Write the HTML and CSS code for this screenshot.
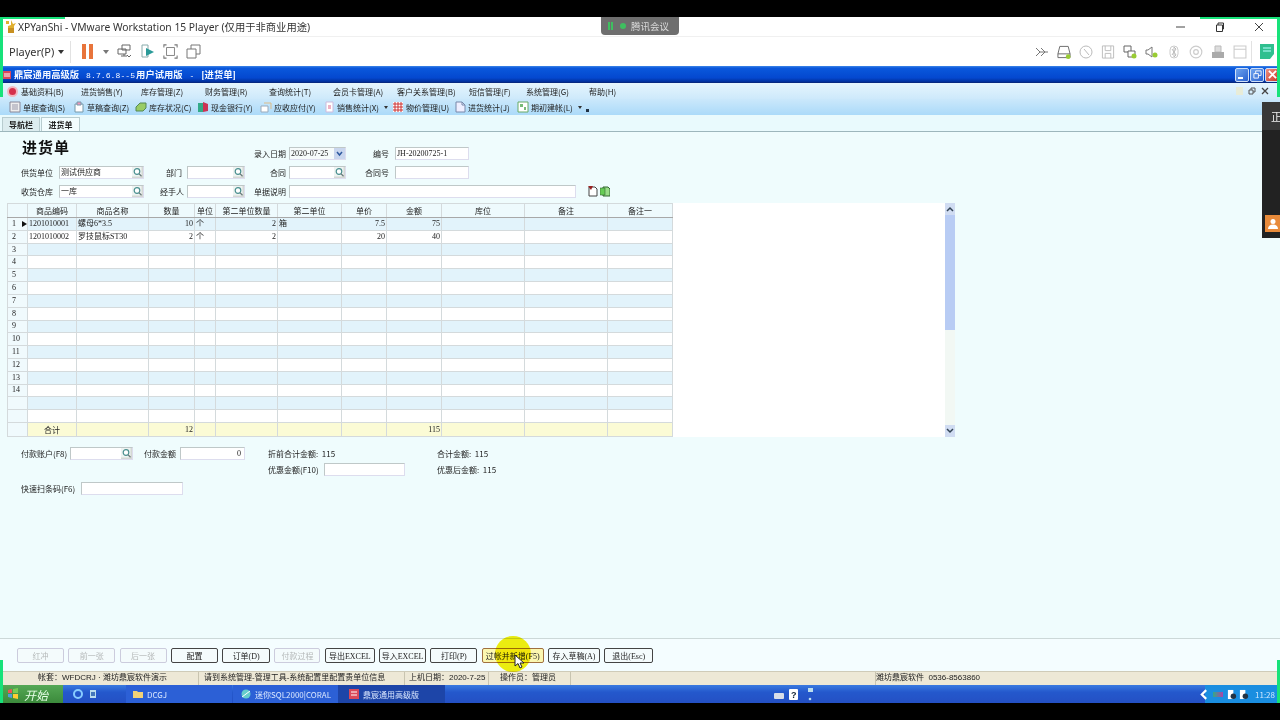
FILE: index.html
```html
<!DOCTYPE html>
<html lang="zh-CN">
<head>
<meta charset="utf-8">
<title>XPYanShi</title>
<link rel="stylesheet" href="styles.css">
</head>
<body>
<div class="screen">
  <div class="black-bar"></div>

  <header class="vm-title">
    <svg class="vm-logo" viewBox="0 0 12 14"><path d="M1 1h3v3H1zM6 0l2 4 3-1-2 3v7H3V6l3-1z" fill="#e0b030"/><path d="M3 8h6v5H3z" fill="#c89020"/></svg>
    <span class="vm-title-text">XPYanShi - VMware Workstation 15 Player (仅用于非商业用途)</span>
    <div class="win-controls">
      <svg viewBox="0 0 10 10"><path d="M0 5h9" stroke="#444" fill="none"/></svg>
      <svg viewBox="0 0 10 10"><path d="M1.5 3h6v6.5h-6zM3 3V1h5.5v6H7.500" stroke="#333" fill="none"/></svg>
      <svg viewBox="0 0 10 10"><path d="M1 1l8 8M9 1l-8 8" stroke="#444" fill="none"/></svg>
    </div>
  </header>

  <div class="vm-toolbar">
    <span class="player-menu">Player(P)</span>
    <span class="caret-dark"></span>
    <span class="vm-sep"></span>
    <span class="pause"><i></i><i></i></span>
    <span class="caret-gray"></span>
    <div class="vm-tools">
      <svg viewBox="0 0 15 15"><path d="M5 1h8v5H5zM1 5h8v5H1zM4 12h6M7 10v2M10 11l2 2 2-2" stroke="#666" fill="none"/></svg>
      <svg viewBox="0 0 15 15"><path d="M2 1h6v12H2z" fill="none" stroke="#8aa"/><path d="M6 4l8 4-8 4z" fill="#2a9a98"/></svg>
      <svg viewBox="0 0 17 17"><path d="M1 4V1h3M13 1h3v3M16 13v3h-3M4 16H1v-3" stroke="#777" fill="none" stroke-width="1.200"/><path d="M4 4h9v9H4z" stroke="#777" fill="none"/></svg>
      <svg viewBox="0 0 15 15"><path d="M5 1h9v9H5z" stroke="#777" fill="none"/><path d="M1 5h9v9H1z" fill="#fff" stroke="#777"/></svg>
    </div>
    <div class="vm-status">
      <svg viewBox="0 0 14 10"><path d="M1 1l4 4-4 4M6 1l4 4-4 4M4 5h9" stroke="#777" fill="none"/></svg>
      <svg viewBox="0 0 15 14"><path d="M3 1h9l2 8v4H1V9z" stroke="#666" fill="#fff"/><path d="M1 9h13" stroke="#666"/><circle cx="12" cy="12" r="2.500" fill="#9c3"/></svg>
      <svg viewBox="0 0 14 14"><circle cx="7" cy="7" r="6" stroke="#bbb" fill="#fff"/><path d="M5 4l5 6" stroke="#bbb"/></svg>
      <svg viewBox="0 0 14 15"><path d="M1 1h12v13H1zM4 1v5h6V1M4 14V9h6v5" stroke="#bbb" fill="#fff"/></svg>
      <svg viewBox="0 0 14 14"><path d="M1 1h7v6H1z" stroke="#666" fill="#fff"/><path d="M5 6h7v6H5z" stroke="#666" fill="#fff"/><circle cx="11" cy="11" r="2.500" fill="#9c3"/></svg>
      <svg viewBox="0 0 14 14"><path d="M1 5h2l4-3v10L3 9H1z" stroke="#777" fill="#fff"/><circle cx="10" cy="10" r="2.500" fill="#9c3"/></svg>
      <svg viewBox="0 0 10 14"><rect x="1" y="1" width="8" height="12" rx="4" stroke="#ccc" fill="#fff"/><path d="M3 4l4 6-2 2V2l2 2-4 6" stroke="#bbb" fill="none"/></svg>
      <svg viewBox="0 0 12 12"><circle cx="6" cy="6" r="5" stroke="#ccc" fill="#fff"/><circle cx="6" cy="6" r="2" stroke="#ccc" fill="none"/></svg>
      <svg viewBox="0 0 14 14"><path d="M4 1h6v6H4z" fill="#ddd" stroke="#bbb"/><path d="M1 7h12v6H1z" fill="#aaa"/></svg>
      <svg viewBox="0 0 13 13"><path d="M1 1h11v11H1zM1 4h11" stroke="#ccc" fill="#fff"/></svg>
      <span class="vm-sep"></span>
      <svg class="note-icon" viewBox="0 0 14 15"><path d="M0 0h14v10l-4 5H0z" fill="#2fbf8f"/><path d="M3 4h8M3 7h8" stroke="#bff"/></svg>
    </div>
  </div>

  <div class="app-title">
    <svg class="app-logo" viewBox="0 0 8 8"><rect width="8" height="8" fill="#d9485a"/><path d="M1 3h6M1 5h6" stroke="#fff"/></svg>
    <span class="app-title-text">鼎宸通用高级版<span class="wide">8.7.6.8--5</span>用户试用版<span class="wide dash">-</span>[进货单]</span>
    <div class="xp-controls">
      <span class="xp-btn"><i class="xp-min"></i></span>
      <span class="xp-btn">
        <svg viewBox="0 0 10 10"><path d="M1 4h5v5H1zM3 4V1h6v5H6" stroke="#fff" fill="none"/></svg>
      </span>
      <span class="xp-btn xp-close">
        <svg viewBox="0 0 10 10"><path d="M1 1l8 8M9 1l-8 8" stroke="#fff" stroke-width="2" fill="none"/></svg>
      </span>
    </div>
  </div>

  <nav class="menu">
    <span class="menu-item menu-first"><i class="stop"></i>基础资料(B)</span>
    <span class="menu-item">进货销售(Y)</span>
    <span class="menu-item">库存管理(Z)</span>
    <span class="menu-item">财务管理(R)</span>
    <span class="menu-item">查询统计(T)</span>
    <span class="menu-item">会员卡管理(A)</span>
    <span class="menu-item">客户关系管理(B)</span>
    <span class="menu-item">短信管理(F)</span>
    <span class="menu-item">系统管理(G)</span>
    <span class="menu-item">帮助(H)</span>
    <div class="mdi-controls">
      <i class="mdi-faded"></i>
      <svg viewBox="0 0 8 8"><path d="M1 3h4v4H1zM3 3V1h4v4H5" stroke="#555" fill="none"/></svg>
      <svg viewBox="0 0 8 8"><path d="M1 1l6 6M7 1l-6 6" stroke="#444" stroke-width="1.300" fill="none"/></svg>
    </div>
  </nav>

  <div class="tools">
    <span class="tool"><svg viewBox="0 0 12 12"><path d="M1 1h10v10H1z" fill="#eee" stroke="#889"/><path d="M3 4h6M3 6h6M3 8h6" stroke="#99a"/></svg>单据查询(S)</span>
    <span class="tool"><svg viewBox="0 0 12 12"><path d="M2 3h8v8H2z" fill="#fff" stroke="#79a"/><path d="M4 1h4v3H4z" fill="#e9b" stroke="#79a"/></svg>草稿查询(Z)</span>
    <span class="tool"><svg viewBox="0 0 12 12"><path d="M1 6l4-4h6v5l-3 3H1z" fill="#9c6" stroke="#585"/></svg>库存状况(C)</span>
    <span class="tool"><svg viewBox="0 0 12 12"><path d="M1 2h5v9H1z" fill="#3a8"/><path d="M6 1l5 2v7l-5 1z" fill="#c35"/></svg>现金银行(Y)</span>
    <span class="tool"><svg viewBox="0 0 12 12"><path d="M1 5h7v6H1z" fill="#fff" stroke="#9ab"/><path d="M4 2h7v6" fill="none" stroke="#db8"/></svg>应收应付(Y)</span>
    <span class="tool"><svg viewBox="0 0 12 12"><path d="M3 1h7v10H3z" fill="#fff" stroke="#cbd"/><path d="M5 5h3M5 7h3" stroke="#d68"/></svg>销售统计(X)<i class="drop"></i></span>
    <span class="tool"><svg viewBox="0 0 12 12"><path d="M1 1h10v10H1z" fill="#fff"/><path d="M1 3h10M1 6h10M1 9h10M3 1v10M6 1v10M9 1v10" stroke="#c33"/></svg>物价管理(U)</span>
    <span class="tool"><svg viewBox="0 0 12 12"><path d="M2 1h6l3 3v7H2z" fill="#eef" stroke="#78a"/><path d="M8 1v3h3" stroke="#78a" fill="none"/></svg>进货统计(J)</span>
    <span class="tool"><svg viewBox="0 0 12 12"><path d="M1 1h10v10H1z" fill="#fff" stroke="#6a6"/><path d="M3 3h3v3H3zM7 6h2v3H7z" fill="#7b7"/></svg>期初建帐(L)<i class="drop"></i></span>
    <i class="chevron-more"></i>
  </div>

  <div class="tabs">
    <span class="tab">导航栏</span>
    <span class="tab tab-active">进货单</span>
  </div>

  <main class="content">
    <section class="head-form">
      <h1 class="doc-title">进货单</h1>
      <label class="f-label c5">录入日期</label>
      <div class="field date-field">2020-07-25<svg class="date-arrow" viewBox="0 0 11 11"><rect width="11" height="11" fill="#c9d6ee"/><path d="M3 4l2.500 3L8 4" stroke="#2f5aa0" stroke-width="1.500" fill="none"/></svg></div>
      <label class="f-label pr6">编号</label>
      <div class="field">JH-20200725-1</div>

      <label class="f-label left">供货单位</label>
      <div class="field search">测试供应商<svg class="lens" viewBox="0 0 11 11"><rect width="11" height="11" fill="#d4d8d4"/><rect x="0" y="0" width="9.500" height="9.500" fill="#eef4f2"/><circle cx="5" cy="4.500" r="2.800" fill="#fff" stroke="#4a8f8f" stroke-width="1.200"/><path d="M7 6.800l2.500 2.500" stroke="#6a7a7a" stroke-width="1.300"/></svg></div>
      <label class="f-label pr5">部门</label>
      <div class="field search"><svg class="lens" viewBox="0 0 11 11"><rect width="11" height="11" fill="#d4d8d4"/><rect x="0" y="0" width="9.500" height="9.500" fill="#eef4f2"/><circle cx="5" cy="4.500" r="2.800" fill="#fff" stroke="#4a8f8f" stroke-width="1.200"/><path d="M7 6.800l2.500 2.500" stroke="#6a7a7a" stroke-width="1.300"/></svg></div>
      <label class="f-label">合同</label>
      <div class="field search"><svg class="lens" viewBox="0 0 11 11"><rect width="11" height="11" fill="#d4d8d4"/><rect x="0" y="0" width="9.500" height="9.500" fill="#eef4f2"/><circle cx="5" cy="4.500" r="2.800" fill="#fff" stroke="#4a8f8f" stroke-width="1.200"/><path d="M7 6.800l2.500 2.500" stroke="#6a7a7a" stroke-width="1.300"/></svg></div>
      <label class="f-label pr6">合同号</label>
      <div class="field"></div>

      <label class="f-label left">收货仓库</label>
      <div class="field search">一库<svg class="lens" viewBox="0 0 11 11"><rect width="11" height="11" fill="#d4d8d4"/><rect x="0" y="0" width="9.500" height="9.500" fill="#eef4f2"/><circle cx="5" cy="4.500" r="2.800" fill="#fff" stroke="#4a8f8f" stroke-width="1.200"/><path d="M7 6.800l2.500 2.500" stroke="#6a7a7a" stroke-width="1.300"/></svg></div>
      <label class="f-label">经手人</label>
      <div class="field search"><svg class="lens" viewBox="0 0 11 11"><rect width="11" height="11" fill="#d4d8d4"/><rect x="0" y="0" width="9.500" height="9.500" fill="#eef4f2"/><circle cx="5" cy="4.500" r="2.800" fill="#fff" stroke="#4a8f8f" stroke-width="1.200"/><path d="M7 6.800l2.500 2.500" stroke="#6a7a7a" stroke-width="1.300"/></svg></div>
      <label class="f-label">单据说明</label>
      <div class="field note-field"></div>
      <div class="doc-icons">
        <svg viewBox="0 0 10 11"><path d="M1 1h6l2 2v7H1z" fill="#fff" stroke="#444"/><path d="M0 0h5l-2 4z" fill="#922"/></svg>
        <svg viewBox="0 0 10 11"><path d="M3 1h5l2 2v7H3z" fill="#9d8" stroke="#363"/><path d="M0 2h5v7H0z" fill="#6c5" stroke="#363" stroke-width=".6"/></svg>
      </div>
    </section>

    <section class="grid-panel">
      <table class="grid">
        <colgroup>
          <col class="w20"><col class="w49"><col class="w72"><col class="w46"><col class="w21"><col class="w62"><col class="w64"><col class="w45"><col class="w55"><col class="w83"><col class="w83"><col class="w65">
        </colgroup>
        <thead>
          <tr><th></th><th>商品编码</th><th>商品名称</th><th>数量</th><th>单位</th><th>第二单位数量</th><th>第二单位</th><th>单价</th><th>金额</th><th>库位</th><th>备注</th><th>备注一</th></tr>
        </thead>
        <tbody>
          <tr><td class="rn">1<i class="row-mark"></i></td><td>1201010001</td><td>螺母6*3.5</td><td class="r">10</td><td>个</td><td class="r">2</td><td>箱</td><td class="r">7.5</td><td class="r">75</td><td></td><td></td><td></td></tr>
          <tr><td class="rn">2</td><td>1201010002</td><td>罗技鼠标ST30</td><td class="r">2</td><td>个</td><td class="r">2</td><td></td><td class="r">20</td><td class="r">40</td><td></td><td></td><td></td></tr>
          <tr><td class="rn">3</td><td></td><td></td><td></td><td></td><td></td><td></td><td></td><td></td><td></td><td></td><td></td></tr>
          <tr><td class="rn">4</td><td></td><td></td><td></td><td></td><td></td><td></td><td></td><td></td><td></td><td></td><td></td></tr>
          <tr><td class="rn">5</td><td></td><td></td><td></td><td></td><td></td><td></td><td></td><td></td><td></td><td></td><td></td></tr>
          <tr><td class="rn">6</td><td></td><td></td><td></td><td></td><td></td><td></td><td></td><td></td><td></td><td></td><td></td></tr>
          <tr><td class="rn">7</td><td></td><td></td><td></td><td></td><td></td><td></td><td></td><td></td><td></td><td></td><td></td></tr>
          <tr><td class="rn">8</td><td></td><td></td><td></td><td></td><td></td><td></td><td></td><td></td><td></td><td></td><td></td></tr>
          <tr><td class="rn">9</td><td></td><td></td><td></td><td></td><td></td><td></td><td></td><td></td><td></td><td></td><td></td></tr>
          <tr><td class="rn">10</td><td></td><td></td><td></td><td></td><td></td><td></td><td></td><td></td><td></td><td></td><td></td></tr>
          <tr><td class="rn">11</td><td></td><td></td><td></td><td></td><td></td><td></td><td></td><td></td><td></td><td></td><td></td></tr>
          <tr><td class="rn">12</td><td></td><td></td><td></td><td></td><td></td><td></td><td></td><td></td><td></td><td></td><td></td></tr>
          <tr><td class="rn">13</td><td></td><td></td><td></td><td></td><td></td><td></td><td></td><td></td><td></td><td></td><td></td></tr>
          <tr><td class="rn">14</td><td></td><td></td><td></td><td></td><td></td><td></td><td></td><td></td><td></td><td></td><td></td></tr>
          <tr><td class="rn"></td><td></td><td></td><td></td><td></td><td></td><td></td><td></td><td></td><td></td><td></td><td></td></tr>
          <tr><td class="rn"></td><td></td><td></td><td></td><td></td><td></td><td></td><td></td><td></td><td></td><td></td><td></td></tr>
        </tbody>
        <tfoot>
          <tr><td class="rn"></td><td class="c">合计</td><td></td><td class="r">12</td><td></td><td></td><td></td><td></td><td class="r">115</td><td></td><td></td><td></td></tr>
        </tfoot>
      </table>
      <div class="grid-blank"></div>
      <div class="scrollbar">
        <span class="sb-btn"><svg viewBox="0 0 8 6"><path d="M1 5l3-3 3 3" stroke="#345" stroke-width="1.500" fill="none"/></svg></span>
        <span class="sb-thumb"></span>
        <span class="sb-track"></span>
        <span class="sb-btn"><svg viewBox="0 0 8 6"><path d="M1 1l3 3 3-3" stroke="#345" stroke-width="1.500" fill="none"/></svg></span>
      </div>
    </section>

    <section class="foot-form">
      <label class="t-label">付款账户(F8)</label>
      <div class="field search">
        <svg class="lens" viewBox="0 0 11 11"><rect width="11" height="11" fill="#d4d8d4"/><rect x="0" y="0" width="9.500" height="9.500" fill="#eef4f2"/><circle cx="5" cy="4.500" r="2.800" fill="#fff" stroke="#4a8f8f" stroke-width="1.200"/><path d="M7 6.800l2.500 2.500" stroke="#6a7a7a" stroke-width="1.300"/></svg>
      </div>
      <label class="t-label amount-label">付款金额</label>
      <div class="field amount">0</div>
      <span class="sum sum-a">折前合计金额: &nbsp;115</span>
      <span class="sum">合计金额: &nbsp;115</span>

      <label class="t-label disc-label">优惠金额(F10)</label>
      <div class="field disc"></div>
      <span class="sum sum-b">优惠后金额: &nbsp;115</span>

      <div class="scan-row">
        <label class="t-label scan-label">快速扫条码(F6)</label>
        <div class="field scan"></div>
      </div>
    </section>
  </main>

  <div class="buttons">
    <button class="btn off b47">红冲</button>
    <button class="btn off b47">前一张</button>
    <button class="btn off b47">后一张</button>
    <button class="btn b47">配置</button>
    <button class="btn b48">订单(D)</button>
    <button class="btn off b46">付款过程</button>
    <button class="btn b50">导出EXCEL</button>
    <button class="btn b47">导入EXCEL</button>
    <button class="btn b47">打印(P)</button>
    <button class="btn b62 hot">过帐并新增(F5)</button>
    <button class="btn b52">存入草稿(A)</button>
    <button class="btn b49">退出(Esc)</button>
  </div>

  <footer class="status">
    <span class="st st1">帐套：WFDCRJ · 潍坊鼎宸软件演示</span>
    <span class="st st2">请到系统管理-管理工具-系统配置里配置贵单位信息</span>
    <span class="st st3">上机日期：2020-7-25</span>
    <span class="st st4">操作员：管理员</span>
    <span class="st st5"></span>
    <span class="st st6">潍坊鼎宸软件&nbsp; 0536-8563860</span>
  </footer>

  <div class="taskbar">
    <span class="start">
      <svg viewBox="0 0 12 12"><path d="M1 2l4-1v4H1z" fill="#e55"/><path d="M6 1l5-1v5H6z" fill="#7c5"/><path d="M1 6h4v4l-4-1z" fill="#59d"/><path d="M6 6h5v5l-5-1z" fill="#fc3"/></svg>
      <em>开始</em>
    </span>
    <div class="quick">
      <svg viewBox="0 0 10 10"><circle cx="5" cy="5" r="4" fill="none" stroke="#8cf" stroke-width="2"/></svg>
      <svg viewBox="0 0 10 10"><path d="M2 1h6v8H2z" fill="#bde"/><path d="M3 3h4v4H3z" fill="#47b"/></svg>
    </div>
    <span class="task task-a"><svg viewBox="0 0 12 12"><path d="M1 3h4l1 1h5v6H1z" fill="#f3d277"/></svg>DCGJ</span>
    <span class="task task-b"><svg viewBox="0 0 12 12"><circle cx="6" cy="6" r="4.500" fill="#6cc"/><path d="M2 9l8-6" stroke="#fff"/></svg>迷你SQL2000|CORAL</span>
    <span class="task task-c"><svg viewBox="0 0 12 12"><rect x="1" y="1" width="10" height="10" fill="#d9485a"/><path d="M3 4h6M3 7h6" stroke="#fff"/></svg>鼎宸通用高级版</span>
    <div class="lang">
      <i class="kbd"></i>
      <svg viewBox="0 0 9 11"><rect width="9" height="11" rx="1" fill="#fff"/><text x="2" y="9" class="help-q">?</text></svg>
      <svg viewBox="0 0 7 14"><path d="M1 1h5v4H1z" fill="#bde"/><circle cx="3" cy="12" r="1.300" fill="#bde"/></svg>
    </div>
    <div class="tray">
      <svg class="tray-back" viewBox="0 0 8 10"><path d="M6 1L2 5l4 4" stroke="#fff" stroke-width="2" fill="none"/></svg>
      <i class="tray-dots"></i>
      <svg viewBox="0 0 11 12"><path d="M1 1h6v10H1z" fill="#fff"/><circle cx="7" cy="8" r="3" fill="#234"/></svg>
      <svg viewBox="0 0 11 12"><path d="M1 1h6v10H1z" fill="#fff"/><circle cx="7" cy="8" r="3" fill="#234"/></svg>
      <span class="clock">11:28</span>
    </div>
  </div>

  <div class="black-bar"></div>

  <div class="meeting"><i class="bars"></i><i class="dot"></i>腾讯会议</div>
  <aside class="side-panel">
    <div class="side-top">正</div>
    <span class="side-user"><svg viewBox="0 0 12 12"><circle cx="6" cy="3.500" r="2.500" fill="#fff"/><path d="M1 11c0-3 2-4.500 5-4.500s5 1.500 5 4.500z" fill="#fff"/></svg></span>
  </aside>
  <i class="frame frame-tl"></i>
  <i class="frame frame-l"></i>
  <i class="frame frame-tr"></i>
  <i class="frame frame-r"></i>
  <i class="frame frame-bl"></i>
  <i class="frame frame-br"></i>
  <i class="spot"></i>
  <svg class="cursor" viewBox="0 0 10 16"><path d="M1 1v11l3-2.500 2 4.500 2-1-2-4h4z" fill="#fff" stroke="#222"/></svg>
</div>
</body>
</html>
```

FILE: styles.css
```css
* { box-sizing: border-box; }
html, body { margin: 0; padding: 0; background: #000; }
body { font-family: "Liberation Serif", "Noto Sans CJK SC", sans-serif; font-size: 8px; color: #222; }
i { font-style: normal; display: block; }
svg { display: block; flex: none; }
.screen { position: relative; width: 1280px; height: 720px; overflow: hidden; display: flex; flex-direction: column; background: #000; filter: blur(.4px); }
.black-bar { height: 17px; flex: none; background: #000; }

/* VMware chrome */
.vm-title { height: 20px; flex: none; background: #fff; display: flex; align-items: center; padding-left: 5px; border-bottom: 1px solid #f0f0f0; }
.vm-logo { width: 12px; height: 14px; }
.vm-title-text { margin-left: 1px; font: 10.300px "Noto Sans", "Noto Sans CJK SC", sans-serif; color: #333; white-space: nowrap; }
.win-controls { margin-left: auto; margin-right: 16px; display: flex; gap: 29px; }
.win-controls svg { width: 10px; height: 10px; }
.vm-toolbar { height: 29px; flex: none; background: #fff; display: flex; align-items: center; padding-left: 9px; }
.player-menu { font: 11px "Noto Sans", sans-serif; color: #333; width: 49px; }
.caret-dark, .caret-gray { width: 0; height: 0; border: 3px solid transparent; border-top: 4px solid #333; border-bottom: 0; }
.caret-gray { border-top-color: #777; margin-left: 10px; }
.vm-sep { width: 1px; height: 22px; background: #e2e2e2; margin-left: 6px; }
.pause { display: flex; gap: 3px; margin-left: 11px; }
.pause i { width: 4px; height: 15px; background: #e8743b; }
.vm-tools { display: flex; gap: 8px; margin-left: 8px; align-items: center; }
.vm-tools svg { width: 15px; height: 15px; }
.vm-status { margin-left: auto; margin-right: 6px; display: flex; gap: 8px; align-items: center; }
.vm-status svg { width: 14px; height: 14px; }
.vm-status .vm-sep { margin: 0 0 0 -4px; }
.vm-status .note-icon { height: 15px; }

/* App title */
.app-title { height: 17px; flex: none; display: flex; align-items: center; padding-left: 3px; color: #f4f8ff; background: linear-gradient(#3f86e8 0, #0a58dc 12%, #0448cf 70%, #02309c 92%, #0a2470 100%); }
.app-logo { width: 8px; height: 8px; }
.app-title-text { margin: -2px 0 0 3px; font-size: 9.300px; font-weight: 700; white-space: nowrap; }
.wide { margin: 0 1px 0 7px; font-family: "Liberation Mono", monospace; font-size: 8px; font-weight: 400; letter-spacing: .1px; }
.dash { margin: 0 7px 0 7px; }
.xp-controls { margin-left: auto; margin-right: 1px; display: flex; gap: 1px; }
.xp-btn { width: 14px; height: 14px; display: flex; align-items: center; justify-content: center; background: linear-gradient(135deg, #6fa4ee, #2a62d0); border: 1px solid #cfe0f8; border-radius: 2px; }
.xp-btn svg { width: 9px; height: 9px; }
.xp-min { width: 5px; height: 2px; background: #fff; margin-top: 6px; margin-right: 3px; }
.xp-close { background: linear-gradient(135deg, #ee9080, #cc3a28); }

/* Menu and tools */
.menu { height: 16px; flex: none; display: grid; grid-template-columns: 81px 60px 64px 64px 64px 64px 72px 57px 63px 1fr auto; align-items: center; background: linear-gradient(#e6f5fd, #cde9fb); font-family: "Noto Sans CJK SC", sans-serif; }
.menu-item { white-space: nowrap; }
.menu-first { display: flex; align-items: center; padding-left: 7px; gap: 3px; }
.stop { width: 11px; height: 11px; border-radius: 50%; background: #d5304c; border: 2px solid #f2b7c0; }
.mdi-controls { display: flex; gap: 5px; padding-right: 11px; }
.mdi-controls svg { width: 8px; height: 8px; }
.mdi-faded { width: 7px; height: 8px; background: #e8ecd8; }
.tools { height: 16px; flex: none; display: grid; grid-template-columns: 64px 62px 62px 63px 63px 69px 62px 63px 62px 1fr; padding-left: 9px; align-items: center; background: linear-gradient(#cbe8fb, #abdaf9); font-family: "Noto Sans CJK SC", sans-serif; }
.tool { display: flex; align-items: center; gap: 2px; white-space: nowrap; }
.tool svg { width: 12px; height: 12px; }
.drop { width: 0; height: 0; border: 2px solid transparent; border-top: 3px solid #333; border-bottom: 0; margin-left: 3px; }
.chevron-more { width: 3px; height: 3px; background: #234; margin-left: 7px; margin-top: 7px; }

.tabs { height: 17px; flex: none; display: flex; align-items: flex-end; padding-left: 2px; background: #e9fafd; border-bottom: 1px solid #9db6bc; font-family: "Noto Sans CJK SC", sans-serif; font-weight: 700; }
.tab { width: 38px; height: 14px; line-height: 13px; text-align: center; background: #dcecef; border: 1px solid #b8cccf; border-bottom: 0; }
.tab-active { width: 39px; margin-left: 1px; background: #f3fdfe; }

/* Content */
.content { flex: 1; min-height: 0; background: #effcfd; padding-top: 15px; border-bottom: 1px solid #ccd8d8; font-family: "Noto Sans CJK SC", sans-serif; }
.head-form { display: grid; grid-template-columns: 21px 38px 85px 43px 58px 44px 57px 49px 74px 107px 12px 24px; grid-template-rows: 13px 13px 13px; row-gap: 6px; align-items: stretch; }
.doc-title { grid-column: 2 / 6; margin: -10px 0 0 1px; font-size: 15px; font-weight: 700; line-height: 20px; letter-spacing: 1px; color: #111; }
.f-label { text-align: right; padding-right: 3px; line-height: 13px; white-space: nowrap; }
.pr5 { padding-right: 5px; }
.pr6 { padding-right: 6px; }
.left { grid-column: 2; text-align: left; padding: 0; }
.c5 { grid-column: 6; }
.field { position: relative; background: #fff; border: 1px solid #bfc8c8; border-right-color: #dde; border-bottom-color: #dde; line-height: 11px; padding-left: 1px; white-space: nowrap; font-family: "Liberation Serif", "Noto Sans CJK SC", sans-serif; }
.date-field { padding-left: 1px; background: #f6fbfb; }
.date-arrow { position: absolute; right: 0; top: 0; width: 11px; height: 11px; }
.lens { position: absolute; right: 0; top: 0; width: 11px; height: 11px; }
.note-field { grid-column: 7 / 11; }
.doc-icons { grid-column: 12; display: flex; gap: 2px; align-items: center; }
.doc-icons svg { width: 10px; height: 11px; }

/* Grid */
.grid-panel { display: flex; height: 234px; margin: 5px 325px 0 7px; background: #fff; }
.grid { width: 665px; flex: none; table-layout: fixed; border-collapse: collapse; font-family: "Liberation Serif", "Noto Sans CJK SC", sans-serif; }
.w20 { width: 20px; } .w49 { width: 49px; } .w72 { width: 72px; } .w46 { width: 46px; } .w21 { width: 21px; } .w62 { width: 62px; } .w64 { width: 64px; } .w45 { width: 45px; } .w55 { width: 55px; } .w83 { width: 83px; } .w65 { width: 65px; }
.grid th, .grid td { height: 12.800px; padding: 0 1px; border: 1px solid #d4dadc; font-weight: 400; line-height: 10px; white-space: nowrap; overflow: hidden; }
.grid th { height: 14px; background: #eefafd; text-align: center; border-bottom: 1px solid #a8a8a8; font-family: "Noto Sans CJK SC", sans-serif; }
.grid tbody tr:nth-child(odd) td { background: #e2f3fb; }
.grid tbody td.rn, .grid tbody tr:nth-child(odd) td.rn, .grid tfoot td.rn { position: relative; background: #f0fafd; padding-left: 4px; }
.grid tfoot td { height: 14px; background: #fbfbd5; border-top: 1px solid #aaa; }
.r { text-align: right; }
.c { text-align: center; font-family: "Noto Sans CJK SC", sans-serif; }
.row-mark { position: absolute; left: 14px; top: 3px; width: 0; height: 0; border: 3px solid transparent; border-left: 5px solid #111; border-right: 0; }
.grid-blank { flex: 1; }
.scrollbar { width: 10px; flex: none; display: flex; flex-direction: column; background: #f2f8f4; }
.sb-btn { height: 12px; flex: none; display: flex; align-items: center; justify-content: center; background: #d0dcf2; }
.sb-btn svg { width: 8px; height: 6px; }
.sb-thumb { height: 115px; flex: none; background: #b8ccf4; }
.sb-track { flex: 1; }

/* Foot form */
.foot-form { display: grid; grid-template-columns: 49px 63px 47px 65px 23px 56px 81px 32px 1fr; grid-template-rows: 13px 13px 13px; row-gap: 3px; margin: 10px 0 0 21px; }
.t-label { line-height: 13px; white-space: nowrap; }
.amount-label { padding-left: 11px; }
.amount { text-align: right; padding-right: 3px; }
.sum { line-height: 13px; white-space: nowrap; }
.sum-a { grid-column: 6 / 9; }
.sum-b { grid-column: 9; }
.disc-label { grid-column: 6; }
.disc { grid-column: 7; }
.scan-row { grid-column: 1 / -1; display: flex; margin-top: 3px; }
.scan-label { width: 60px; }
.scan { width: 102px; height: 13px; }

/* Buttons */
.buttons { height: 32px; flex: none; display: flex; align-items: center; gap: 4.300px; padding: 0 0 0 17px; background: #f4fdff; }
.btn { height: 15px; padding: 0; background: #f4fbfc; border: 1px solid #444; border-radius: 2px; font: 8px "Liberation Serif", "Noto Sans CJK SC", sans-serif; color: #222; white-space: nowrap; }
.off { border-color: #ccd; color: #b4b8b8; }
.hot { background: #fbf7b0; border-color: #a07040; }
.b46 { width: 46px; } .b47 { width: 47px; } .b48 { width: 48px; } .b49 { width: 49px; } .b50 { width: 50px; } .b52 { width: 52px; } .b62 { width: 62px; }

/* Status */
.status { height: 14px; flex: none; display: flex; background: #ede8d6; border-top: 1px solid #cfcbb8; font: 8px "Liberation Sans", "Noto Sans CJK SC", sans-serif; line-height: 11px; }
.st { border-right: 1px solid #c8c4b0; white-space: nowrap; height: 100%; }
.st1 { width: 199px; padding-left: 38px; }
.st2 { width: 206px; padding-left: 5px; }
.st3 { width: 84px; padding-left: 4px; }
.st4 { width: 82px; padding-left: 11px; }
.st5 { width: 305px; }
.st6 { border: 0; }

/* Taskbar */
.taskbar { height: 18px; flex: none; display: flex; align-items: center; background: linear-gradient(#3a7ae0, #2458cc 40%, #2450c4); color: #dbe8ff; font-family: "Noto Sans CJK SC", sans-serif; }
.start { width: 63px; height: 100%; display: flex; align-items: center; gap: 5px; padding-left: 7px; background: linear-gradient(#55a855, #3b8a3b); color: #e8ffe8; font-size: 12px; }
.start svg { width: 12px; height: 12px; }
.start em { font-style: italic; font-family: "Noto Sans CJK SC", sans-serif; }
.quick { width: 63px; display: flex; gap: 5px; padding-left: 10px; }
.quick svg { width: 10px; height: 10px; }
.task { height: 100%; display: flex; align-items: center; gap: 3px; white-space: nowrap; background: #2c60d6; }
.task svg { width: 12px; height: 12px; }
.task-a { width: 106px; padding-left: 6px; margin-right: 1px; }
.task-b { width: 105px; padding-left: 7px; }
.task-c { width: 107px; padding-left: 10px; background: #1d45a8; }
.lang { display: flex; align-items: center; gap: 5px; margin-left: 329px; }
.kbd { width: 10px; height: 6px; background: #d8dde8; border-radius: 1px; margin-top: 3px; }
.lang svg:nth-of-type(1) { width: 9px; height: 11px; }
.lang svg:nth-of-type(2) { width: 7px; height: 14px; margin-left: 4px; }
.help-q { font: 700 9px "Liberation Sans", sans-serif; fill: #123; }
.tray { margin-left: auto; width: 75px; height: 100%; display: flex; align-items: center; gap: 2px; background: #1a8ee0; }
.tray svg { width: 10px; height: 11px; }
.tray .tray-back { margin-left: -6px; }
.tray-dots { width: 10px; height: 5px; margin: 0 2px; background: linear-gradient(90deg, #3a8, #a4a); }
.clock { margin-left: 4px; font-size: 8px; color: #cfe8ff; white-space: nowrap; }

/* Overlays */
.meeting { position: absolute; left: 601px; top: 17px; width: 78px; height: 18px; display: flex; align-items: center; gap: 2px; padding-left: 7px; border-radius: 0 0 4px 4px; background: #6e6e6e; color: #d8d8d8; font: 9.500px "Noto Sans CJK SC", sans-serif; }
.bars { width: 7px; height: 8px; background: linear-gradient(90deg, #3fbf60 2px, transparent 2px, transparent 3px, #3fbf60 3px, #3fbf60 5px, transparent 5px); }
.dot { width: 6px; height: 6px; margin: 0 3px; border-radius: 50%; background: #3fbf60; }
.side-panel { position: absolute; left: 1262px; top: 102px; width: 18px; height: 136px; background: #222; }
.side-top { height: 28px; padding: 7px 0 0 9px; background: #383838; color: #eee; font-size: 11px; line-height: 14px; overflow: hidden; font-family: "Noto Sans CJK SC", sans-serif; }
.side-user { position: absolute; left: 3px; top: 113px; width: 15px; height: 17px; display: flex; align-items: center; justify-content: center; background: #e88a3a; }
.side-user svg { width: 12px; height: 12px; }
.frame { position: absolute; background: #17e27a; }
.frame-tl { left: 0; top: 17px; width: 65px; height: 2px; }
.frame-l { left: 0; top: 17px; width: 3px; height: 80px; }
.frame-tr { left: 1200px; top: 17px; width: 80px; height: 2px; }
.frame-r { left: 1277px; top: 17px; width: 3px; height: 80px; }
.frame-bl { left: 0; top: 660px; width: 3px; height: 43px; }
.frame-br { left: 1277px; top: 660px; width: 3px; height: 43px; }
.spot { position: absolute; left: 495px; top: 636px; width: 36px; height: 36px; border-radius: 50%; background: #f6ee10; mix-blend-mode: multiply; }
.cursor { position: absolute; left: 514px; top: 654px; width: 10px; height: 16px; }
```
